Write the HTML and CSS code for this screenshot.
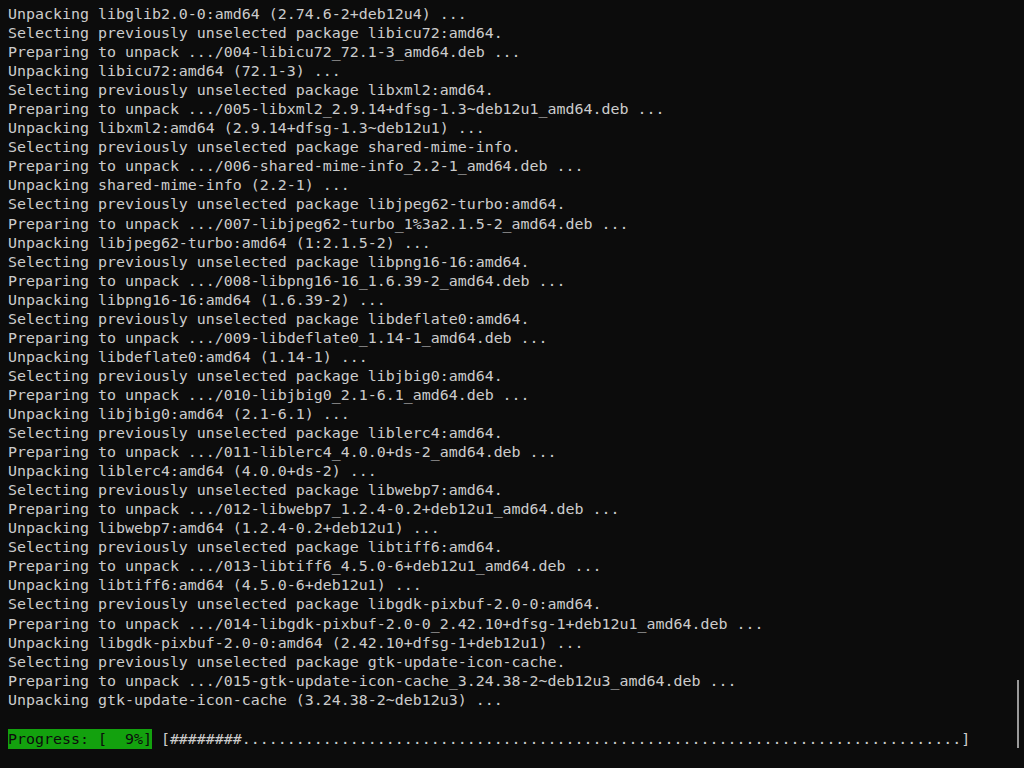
FILE: index.html
```html
<!DOCTYPE html>
<html>
<head>
<meta charset="utf-8">
<link rel="stylesheet" href="styles.css">
</head>
<body>
<div class="term">
<pre class="out">Unpacking libglib2.0-0:amd64 (2.74.6-2+deb12u4) ...
Selecting previously unselected package libicu72:amd64.
Preparing to unpack .../004-libicu72_72.1-3_amd64.deb ...
Unpacking libicu72:amd64 (72.1-3) ...
Selecting previously unselected package libxml2:amd64.
Preparing to unpack .../005-libxml2_2.9.14+dfsg-1.3~deb12u1_amd64.deb ...
Unpacking libxml2:amd64 (2.9.14+dfsg-1.3~deb12u1) ...
Selecting previously unselected package shared-mime-info.
Preparing to unpack .../006-shared-mime-info_2.2-1_amd64.deb ...
Unpacking shared-mime-info (2.2-1) ...
Selecting previously unselected package libjpeg62-turbo:amd64.
Preparing to unpack .../007-libjpeg62-turbo_1%3a2.1.5-2_amd64.deb ...
Unpacking libjpeg62-turbo:amd64 (1:2.1.5-2) ...
Selecting previously unselected package libpng16-16:amd64.
Preparing to unpack .../008-libpng16-16_1.6.39-2_amd64.deb ...
Unpacking libpng16-16:amd64 (1.6.39-2) ...
Selecting previously unselected package libdeflate0:amd64.
Preparing to unpack .../009-libdeflate0_1.14-1_amd64.deb ...
Unpacking libdeflate0:amd64 (1.14-1) ...
Selecting previously unselected package libjbig0:amd64.
Preparing to unpack .../010-libjbig0_2.1-6.1_amd64.deb ...
Unpacking libjbig0:amd64 (2.1-6.1) ...
Selecting previously unselected package liblerc4:amd64.
Preparing to unpack .../011-liblerc4_4.0.0+ds-2_amd64.deb ...
Unpacking liblerc4:amd64 (4.0.0+ds-2) ...
Selecting previously unselected package libwebp7:amd64.
Preparing to unpack .../012-libwebp7_1.2.4-0.2+deb12u1_amd64.deb ...
Unpacking libwebp7:amd64 (1.2.4-0.2+deb12u1) ...
Selecting previously unselected package libtiff6:amd64.
Preparing to unpack .../013-libtiff6_4.5.0-6+deb12u1_amd64.deb ...
Unpacking libtiff6:amd64 (4.5.0-6+deb12u1) ...
Selecting previously unselected package libgdk-pixbuf-2.0-0:amd64.
Preparing to unpack .../014-libgdk-pixbuf-2.0-0_2.42.10+dfsg-1+deb12u1_amd64.deb ...
Unpacking libgdk-pixbuf-2.0-0:amd64 (2.42.10+dfsg-1+deb12u1) ...
Selecting previously unselected package gtk-update-icon-cache.
Preparing to unpack .../015-gtk-update-icon-cache_3.24.38-2~deb12u3_amd64.deb ...
Unpacking gtk-update-icon-cache (3.24.38-2~deb12u3) ...

<span class="progress">Progress: [  9%]</span> [########................................................................................]</pre>
</div>
<div class="scroll-thumb"></div>
</body>
</html>
```

FILE: styles.css
```css
html, body {
  margin: 0;
  padding: 0;
  background: #0c0c0c;
  height: 100%;
  overflow: hidden;
}

.term {
  padding: 5px 8px 0 8px;
}

.out {
  margin: 0;
  font-family: "DejaVu Sans Mono", "Liberation Mono", monospace;
  font-size: 14.95px;
  line-height: 19.05px;
  color: #cccccc;
  white-space: pre;
}

.progress {
  background: #13a10e;
  color: #0c0c0c;
  display: inline-block;
  line-height: 20px;
}

.scroll-thumb {
  position: absolute;
  left: 1017px;
  top: 680px;
  width: 2px;
  height: 68px;
  background: #9a9a9a;
}
```
